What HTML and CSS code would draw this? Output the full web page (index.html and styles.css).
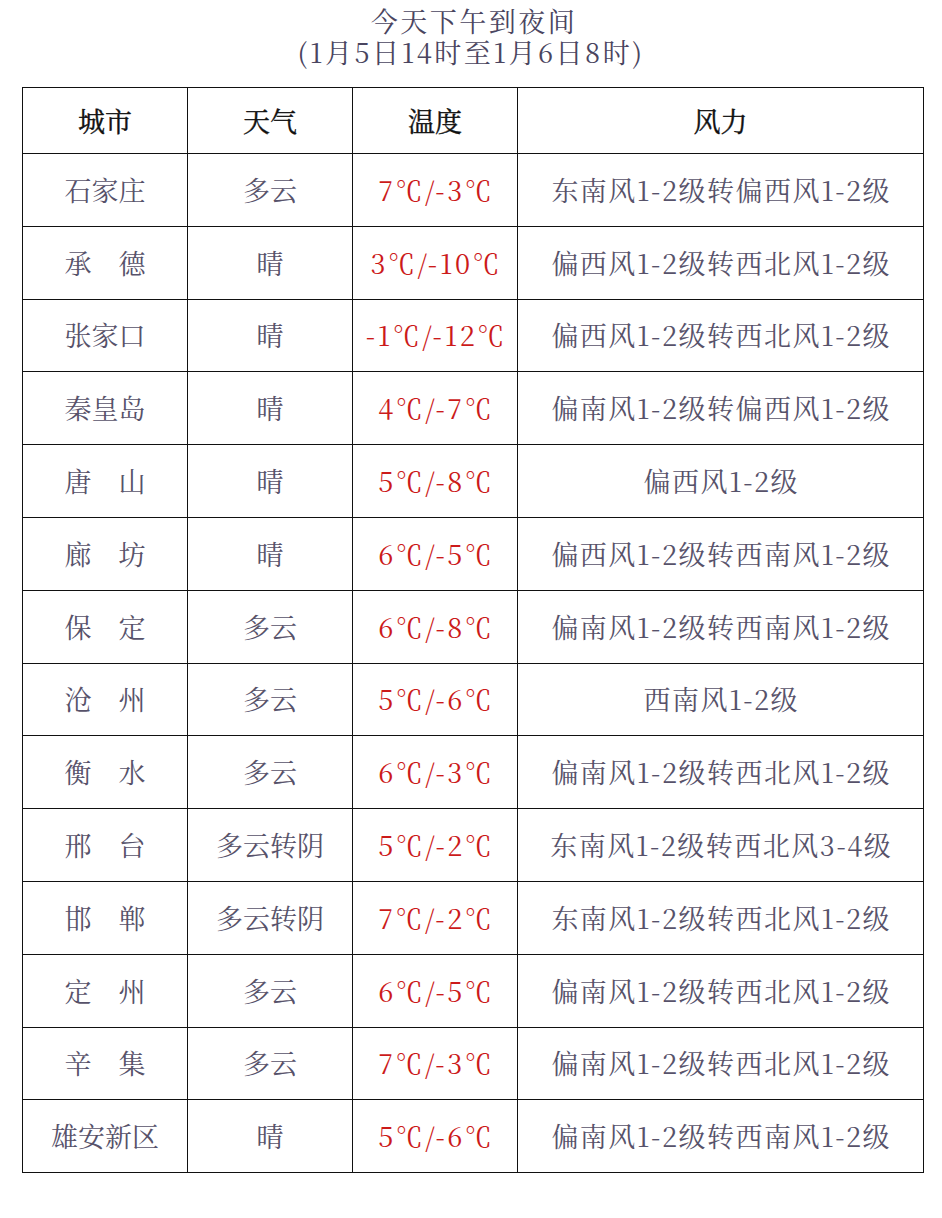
FILE: index.html
```html
<!DOCTYPE html>
<html lang="zh-CN">
<head>
<meta charset="utf-8">
<link rel="stylesheet" href="styles.css">
</head>
<body>
<div class="title">
  <div class="t1">今天下午到夜间</div>
  <div class="t2">(1月5日14时至1月6日8时)</div>
</div>
<table class="wx">
  <colgroup><col class="c1"><col class="c2"><col class="c3"><col class="c4"></colgroup>
  <thead>
    <tr class="head"><th>城市</th><th>天气</th><th>温度</th><th>风力</th></tr>
  </thead>
  <tbody>
    <tr><td>石家庄</td><td>多云</td><td class="temp">7℃/-3℃</td><td class="wind">东南风1-2级转偏西风1-2级</td></tr>
    <tr><td>承　德</td><td>晴</td><td class="temp">3℃/-10℃</td><td class="wind">偏西风1-2级转西北风1-2级</td></tr>
    <tr><td>张家口</td><td>晴</td><td class="temp">-1℃/-12℃</td><td class="wind">偏西风1-2级转西北风1-2级</td></tr>
    <tr><td>秦皇岛</td><td>晴</td><td class="temp">4℃/-7℃</td><td class="wind">偏南风1-2级转偏西风1-2级</td></tr>
    <tr><td>唐　山</td><td>晴</td><td class="temp">5℃/-8℃</td><td class="wind">偏西风1-2级</td></tr>
    <tr><td>廊　坊</td><td>晴</td><td class="temp">6℃/-5℃</td><td class="wind">偏西风1-2级转西南风1-2级</td></tr>
    <tr><td>保　定</td><td>多云</td><td class="temp">6℃/-8℃</td><td class="wind">偏南风1-2级转西南风1-2级</td></tr>
    <tr><td>沧　州</td><td>多云</td><td class="temp">5℃/-6℃</td><td class="wind">西南风1-2级</td></tr>
    <tr><td>衡　水</td><td>多云</td><td class="temp">6℃/-3℃</td><td class="wind">偏南风1-2级转西北风1-2级</td></tr>
    <tr><td>邢　台</td><td>多云转阴</td><td class="temp">5℃/-2℃</td><td class="wind">东南风1-2级转西北风3-4级</td></tr>
    <tr><td>邯　郸</td><td>多云转阴</td><td class="temp">7℃/-2℃</td><td class="wind">东南风1-2级转西北风1-2级</td></tr>
    <tr><td>定　州</td><td>多云</td><td class="temp">6℃/-5℃</td><td class="wind">偏南风1-2级转西北风1-2级</td></tr>
    <tr><td>辛　集</td><td>多云</td><td class="temp">7℃/-3℃</td><td class="wind">偏南风1-2级转西北风1-2级</td></tr>
    <tr><td>雄安新区</td><td>晴</td><td class="temp">5℃/-6℃</td><td class="wind">偏南风1-2级转西南风1-2级</td></tr>
  </tbody>
</table>
</body>
</html>
```
FILE: styles.css
```css
html, body {
  margin: 0;
  padding: 0;
  background: #ffffff;
}
body {
  font-family: "Noto Serif CJK SC", "Noto Sans CJK SC", "Liberation Serif", serif;
  color: #57526a;
}
.title {
  height: 87px;
  box-sizing: border-box;
  padding-top: 5px;
  text-align: center;
  color: #4a4560;
  font-size: 27px;
  line-height: 31px;
}
.title .t1 { padding-left: 6px; letter-spacing: 2.5px; }
.title .t2 { letter-spacing: 2.5px; }
.wx {
  margin-left: 22px;
  width: 901px;
  border-collapse: collapse;
  table-layout: fixed;
}
.c1, .c2, .c3 { width: 165px; }
.c4 { width: 406px; }
.wx th, .wx td {
  border: 1.5px solid #111;
  text-align: center;
  vertical-align: middle;
  padding: 0;
  font-size: 27px;
  line-height: 30px;
  white-space: nowrap;
}
.wx th {
  height: 65px;
  color: #111;
  font-weight: normal;
  -webkit-text-stroke: 0.4px #111;
}
.wx td {
  height: 71.8px;
}
.temp {
  color: #cc1a1a;
  letter-spacing: 2.5px;
  text-indent: 2.5px;
}
.wind {
  letter-spacing: 1.5px;
  text-indent: 1.5px;
}
```
